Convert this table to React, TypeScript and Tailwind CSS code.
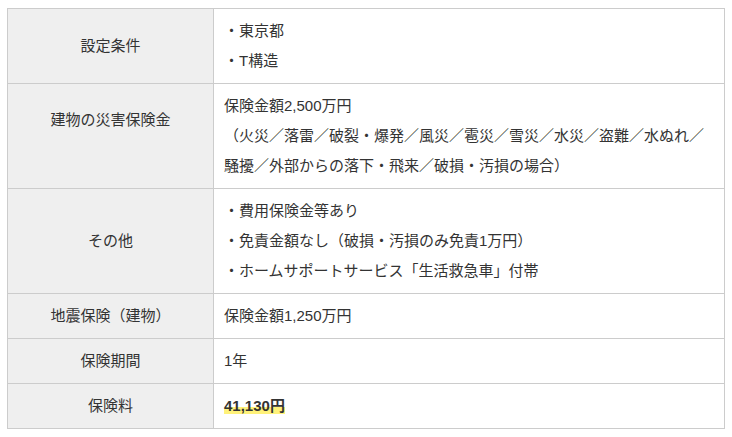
const rows: { label: string; labelPad?: string; lines: React.ReactNode[] }[] = [
  { label: '設定条件', lines: ['・東京都', '・T構造'] },
  {
    label: '建物の災害保険金',
    labelPad: 'pb-[39px]',
    lines: [
      '保険金額2,500万円',
      '（火災／落雷／破裂・爆発／風災／雹災／雪災／水災／盗難／水ぬれ／',
      '騒擾／外部からの落下・飛来／破損・汚損の場合）',
    ],
  },
  {
    label: 'その他',
    lines: ['・費用保険金等あり', '・免責金額なし（破損・汚損のみ免責1万円）', '・ホームサポートサービス「生活救急車」付帯'],
  },
  { label: '地震保険（建物）', lines: ['保険金額1,250万円'] },
  { label: '保険期間', lines: ['1年'] },
  {
    label: '保険料',
    lines: [
      <strong className="font-bold bg-[linear-gradient(transparent_60%,#fff27a_60%)]">41,130円</strong>,
    ],
  },
]

export default function App() {
  return (
    <div className="bg-white min-h-screen pt-[8px] pl-[7px] text-[15px] leading-[30px] text-[#333] font-['Liberation_Sans','Noto_Sans_CJK_JP',sans-serif]">
      <table className="w-[718px] border-collapse">
        <tbody>
          {rows.map(r => (
            <tr key={r.label}>
              <th
                className={
                  'w-[206px] border border-[#ccc] bg-[#efefef] font-normal text-center pt-[7px] px-[10px] ' +
                  (r.labelPad ?? 'pb-[7px]')
                }
              >
                {r.label}
              </th>
              <td className="border border-[#ccc] py-[7px] px-[10px] text-left whitespace-nowrap">
                {r.lines.map((l, i) => (
                  <div key={i}>{l}</div>
                ))}
              </td>
            </tr>
          ))}
        </tbody>
      </table>
    </div>
  )
}
